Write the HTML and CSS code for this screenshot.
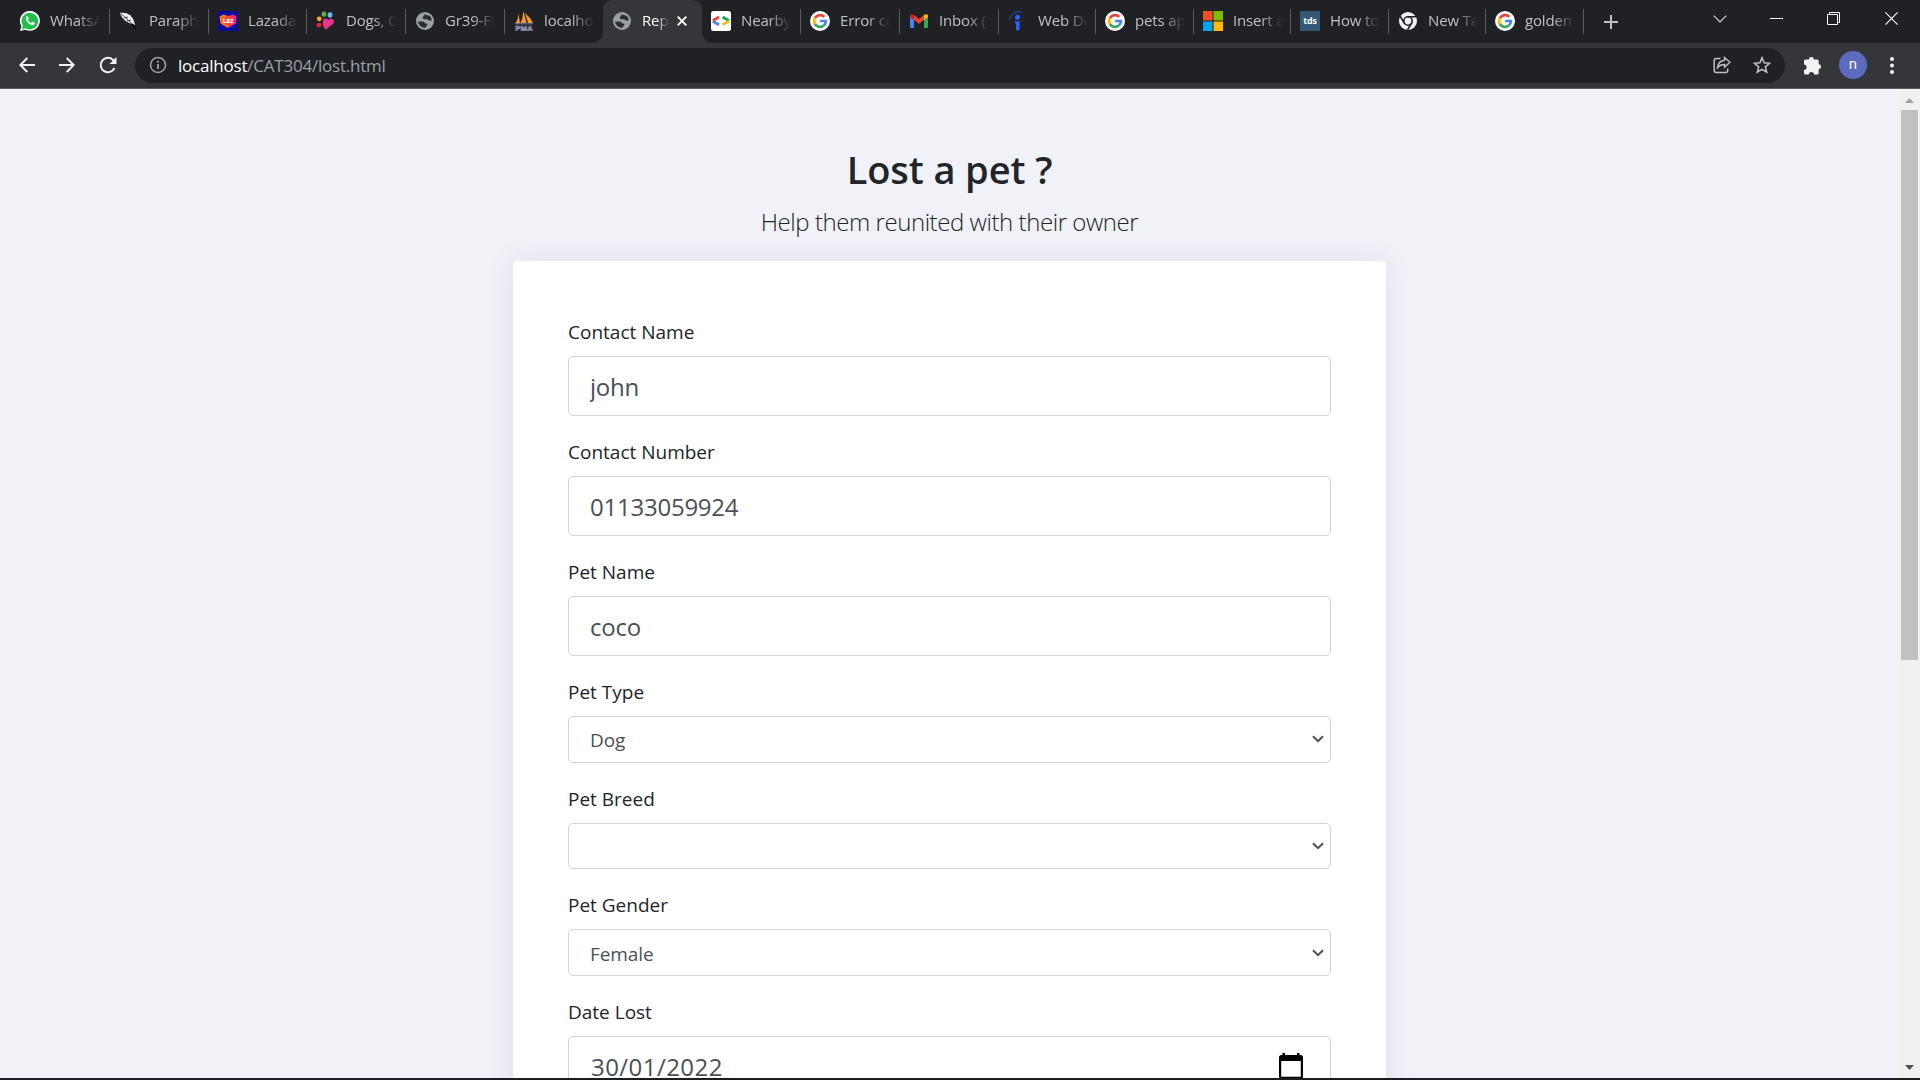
FILE: index.html
```html
<!DOCTYPE html>
<html lang="en">
<head>
<meta charset="utf-8">
<title>Report lost pet</title>
<link rel="stylesheet" href="styles.css">
</head>
<body>
<svg class="defs" width="0" height="0">
  <symbol id="google" viewBox="0 0 20 20">
    <circle cx="10" cy="10" r="10" fill="#fff"/>
    <g fill="none" stroke-width="2.7">
      <path d="M14.3 5.900A5.900 5.900 0 0 0 4.900 7.100" stroke="#ea4335"/>
      <path d="M4.900 7.100a5.900 5.900 0 0 0 0 5.900" stroke="#fbbc05"/>
      <path d="M4.900 13a5.900 5.900 0 0 0 8.900 1.500" stroke="#34a853"/>
      <path d="M13.800 14.500A5.900 5.900 0 0 0 15.900 10H10.200" stroke="#4285f4"/>
    </g>
  </symbol>
  <symbol id="globe" viewBox="0 0 20 20">
    <circle cx="10" cy="10" r="9" fill="#9aa0a6"/>
    <path d="M3 10.500h4.500q2.500 0 2.500 2h1.500q1 0 1 1.200l-2.500 3.200Q4 16.500 3 10.500zM8.500 3.200l6 1.500q2.300 2 2.300 4.800h-3.300l-1.200-1.300H9.500q-1.800 0-1.800-1.800 0-1.500 1.800-1.500z" fill="#2b2d30"/>
  </symbol>
</svg>

<header class="tabs">
  <div class="tab"><svg viewBox="0 0 20 20"><path d="M0 20l1.300-5A10 10 0 1 1 5.200 18.700z" fill="#fff"/><path d="M1.800 18.200l1-3.700a8.300 8.300 0 1 1 2.900 2.800z" fill="#1fc04a"/><path d="M6.700 5.300c-2.500 2 .6 7 4.600 8.700 1.700.8 3.500-.2 3.500-2.200l-2.300-1.200-1.200 1.300c-1.600-.6-2.800-1.800-3.400-3.200l1-1.200-.9-2.200z" fill="#fff"/></svg><span>WhatsApp</span></div>
  <div class="tab"><svg viewBox="0 0 20 20"><path d="M1 2c6-1 13 1 15 12l-3-1C7 11 3 8 1 2z" fill="#f4f4f4"/><path d="M2 2.500l14 13M5 7l4-1M8 10l4-1" stroke="#333" stroke-width=".9" fill="none"/><path d="M13 13l3.500 4.500" stroke="#000" stroke-width="1.500"/></svg><span>Paraphrase</span></div>
  <div class="tab"><svg viewBox="0 0 20 20"><path d="M0 0h20v20H0z" fill="#0a0ea0"/><path d="M1.500 5.500L5.500 3.500 10 5v12L2.500 12.500z" fill="#ff7a00"/><path d="M10 5l5-1.500 3.500 2-.7 7L10 17z" fill="#f5247c"/><path d="M4 6l6-1 5 1v7l-5 2-5-3z" fill="#fa4a3f"/><text x="10" y="12" class="laz">Laz</text></svg><span>Lazada.com</span></div>
  <div class="tab"><svg viewBox="0 0 20 20"><ellipse cx="8" cy="3.200" rx="2.300" ry="2.600" fill="#5fae46"/><ellipse cx="14" cy="4" rx="2.400" ry="2.700" fill="#62c4ee"/><circle cx="3.200" cy="7.800" r="2.400" fill="#f7a71b"/><ellipse cx="3" cy="14" rx="2.500" ry="2.200" fill="#ee1c33"/><path d="M7 10c1-4 5-2 5.500-1 2.500-2.500 6-1 5.300 2.200-.8 3-5 4-7.300 7.300C7.500 18 6.500 13 7 10z" fill="#e83590"/></svg><span>Dogs, Cats</span></div>
  <div class="tab"><svg viewBox="0 0 20 20"><use href="#globe"/></svg><span>Gr39-Final</span></div>
  <div class="tab"><svg viewBox="0 0 20 20"><path d="M1 13Q4 9 4.500 2.500L6 12zM6.500 12Q9 7 9.500 0l3 12zM11 2q5 4 8 10h-5z" fill="#f39a25"/><path d="M1 12.800h18" stroke="#6c78af" stroke-width="1"/><text x="10" y="19.700" class="pma">PMA</text></svg><span>localhost</span></div>
  <div class="tab active"><svg viewBox="0 0 20 20"><use href="#globe"/></svg><span>Report</span><svg class="close" viewBox="0 0 10 10"><path d="M.7.7l8.600 8.600M9.300.7L.7 9.300" stroke="#fff" stroke-width="1.900"/></svg></div>
  <div class="tab plain"><svg viewBox="0 0 20 20"><rect width="20" height="20" rx="2.500" fill="#fff"/><g fill="none" stroke-width="2.700"><path d="M1.800 10.200L8 13.700" stroke="#4285f4"/><path d="M8 6L1.800 9.700" stroke="#ea4335"/><path d="M11.700 6l6.500 3.800" stroke="#0f9d58"/><path d="M18.200 10l-6.500 3.700" stroke="#fbbc05"/></g></svg><span>Nearby S</span></div>
  <div class="tab"><svg viewBox="0 0 20 20"><use href="#google"/></svg><span>Error code</span></div>
  <div class="tab"><svg viewBox="0 0 20 20"><path d="M1 5l4 3v9H2.200Q1 17 1 15.800z" fill="#4285f4"/><path d="M15 8l4-3v10.800q0 1.200-1.200 1.200H15z" fill="#34a853"/><path d="M5 4l5 3.900L15 4v5l-5 3.800L5 9z" fill="#ea4335"/><path d="M1 5c0-2 2.300-2.500 4-1v5L1 6z" fill="#c5221f"/><path d="M19 5c0-2-2.300-2.500-4-1v5l4-3z" fill="#fbbc04"/></svg><span>Inbox (1)</span></div>
  <div class="tab"><svg viewBox="0 0 20 20"><path d="M1.500 9C3 1.500 9-.5 14.500 1.500" fill="none" stroke="#1d4fc4" stroke-width="1"/><circle cx="9.500" cy="6.200" r="2.500" fill="#2962ff"/><path d="M7 10.200h4.600v9H8v-7H7z" fill="#2962ff"/></svg><span>Web Dev</span></div>
  <div class="tab"><svg viewBox="0 0 20 20"><use href="#google"/></svg><span>pets app</span></div>
  <div class="tab"><svg viewBox="0 0 20 20"><path d="M0 0h9.500v9.500H0z" fill="#f25022"/><path d="M10.500 0H20v9.500h-9.500z" fill="#7fba00"/><path d="M0 10.500h9.500V20H0z" fill="#00a4ef"/><path d="M10.500 10.500H20V20h-9.500z" fill="#ffb900"/></svg><span>Insert a</span></div>
  <div class="tab"><svg viewBox="0 0 20 20"><path d="M0 0h20v20H0z" fill="#355876"/><text x="10" y="13" class="tds">tds</text></svg><span>How to u</span></div>
  <div class="tab"><svg viewBox="0 0 20 20"><circle cx="10" cy="10" r="9" fill="#f1f3f4"/><circle cx="10" cy="10" r="4.200" fill="#f1f3f4" stroke="#202124" stroke-width="1.600"/><path d="M10 5.800h8.300M6.300 12.100L2 5M13.600 12.100L9.500 19" stroke="#202124" stroke-width="1.600"/></svg><span>New Tab</span></div>
  <div class="tab"><svg viewBox="0 0 20 20"><use href="#google"/></svg><span>golden r</span></div>
  <div class="window-controls">
    <svg width="16" height="16" viewBox="0 0 16 16"><path d="M8 1v14M1 8h14" stroke="#bdc1c6" stroke-width="2"/></svg>
    <svg class="chevron-down" width="14" height="8" viewBox="0 0 14 8"><path d="M.7.7L7 7 13.300.7" fill="none" stroke="#ddd" stroke-width="1.100"/></svg>
    <svg class="minimise" width="13" height="13" viewBox="0 0 13 13"><path d="M0 6.500h13" stroke="#fff"/></svg>
    <svg class="restore" width="13" height="13" viewBox="0 0 13 13"><path d="M.5 2.500h10v10H.5zM2.500 2.500v-2h10v10h-2" fill="none" stroke="#fff"/></svg>
    <svg class="quit" width="13" height="13" viewBox="0 0 13 13"><path d="M.4.4l12.200 12.200M12.600.4L.4 12.600" stroke="#fff" stroke-width="1.100"/></svg>
  </div>
</header>

<nav class="toolbar">
  <svg width="16" height="16" viewBox="0 0 16 16"><path d="M16 8H1.500M8.300 1L1.300 8l7 7" fill="none" stroke="#f1f3f4" stroke-width="1.900"/></svg>
  <svg width="16" height="16" viewBox="0 0 16 16"><path d="M0 8h14.500M7.700 1l7 7-7 7" fill="none" stroke="#f1f3f4" stroke-width="1.900"/></svg>
  <svg width="18" height="18" viewBox="0 0 18 18"><path d="M15.500 12A7.200 7.200 0 1 1 14 3.900L16 6" fill="none" stroke="#f1f3f4" stroke-width="2"/><path d="M17.500 1v7h-7z" fill="#f1f3f4"/></svg>
  <div class="address">
    <svg width="18" height="18" viewBox="0 0 18 18"><circle cx="9" cy="9" r="7.500" fill="none" stroke="#9aa0a6" stroke-width="1.600"/><path d="M9 8v5M9 4.700v2" stroke="#9aa0a6" stroke-width="1.800"/></svg>
    <span class="url"><b>localhost</b>/CAT304/lost.html</span>
    <svg width="18" height="18" viewBox="0 0 18 18"><path d="M7.500 2.500H3.200Q1.200 2.500 1.200 4.500v10q0 2 2 2h9.500q2 0 2-2v-2" fill="none" stroke="#bdc1c6" stroke-width="1.500"/><path d="M11.500 1.500L17 6.300l-5.500 4.800V8.500c-3 0-5 .7-7 3.200.5-4 3-7 7-7.400z" fill="none" stroke="#bdc1c6" stroke-width="1.400"/></svg>
    <svg width="18" height="18" viewBox="0 0 18 18"><path d="M9 1.800l2.100 5 5.400.5-4.100 3.600 1.200 5.300L9 13.400l-4.600 2.800 1.200-5.300L1.500 7.300l5.400-.5z" fill="none" stroke="#bdc1c6" stroke-width="1.600"/></svg>
  </div>
  <svg width="19" height="19" viewBox="0 0 19 19"><path d="M1 5q0-1.500 1.500-1.500H6a2.400 2.400 0 0 1 4.800 0h3.400q1.500 0 1.500 1.500v3.300a2.400 2.400 0 0 1 0 4.800V17q0 1.500-1.500 1.500H11a2.600 2.600 0 0 0-5.200 0H2.500Q1 18.500 1 17v-3.200a2.600 2.600 0 0 0 0-5.200z" fill="#f1f3f4"/></svg>
  <span class="avatar">n</span>
  <svg width="4" height="17" viewBox="0 0 4 17"><g fill="#f1f3f4"><circle cx="2" cy="2" r="2"/><circle cx="2" cy="8.500" r="2"/><circle cx="2" cy="15" r="2"/></g></svg>
</nav>

<div class="viewport">
  <main class="page">
    <h1>Lost a pet ?</h1>
    <p class="lead">Help them reunited with their owner</p>
    <form class="card">
      <label for="owner">Contact Name</label>
      <div class="control"><input id="owner" value="john"></div>
      <label for="phone">Contact Number</label>
      <div class="control"><input id="phone" value="01133059924"></div>
      <label for="pet">Pet Name</label>
      <div class="control"><input id="pet" value="coco"></div>
      <label for="type">Pet Type</label>
      <div class="control choice"><select id="type"><option>Dog</option></select><svg class="arrow" viewBox="0 0 12 8"><path d="M1 1.200l5 4.900 5-4.900" fill="none" stroke="#495057" stroke-width="2"/></svg></div>
      <label for="breed">Pet Breed</label>
      <div class="control choice"><select id="breed"><option></option></select><svg class="arrow" viewBox="0 0 12 8"><path d="M1 1.200l5 4.900 5-4.900" fill="none" stroke="#495057" stroke-width="2"/></svg></div>
      <label for="gender">Pet Gender</label>
      <div class="control choice"><select id="gender"><option>Female</option></select><svg class="arrow" viewBox="0 0 12 8"><path d="M1 1.200l5 4.900 5-4.900" fill="none" stroke="#495057" stroke-width="2"/></svg></div>
      <label for="date">Date Lost</label>
      <div class="control date"><input id="date" value="30/01/2022"><svg class="calendar" viewBox="0 0 24 26"><path d="M3.500 0H6v3H3.500zM18 0h2.500v3H18z"/><path d="M2.500 2h19Q24 2 24 4.500v19q0 2.500-2.500 2.500h-19Q0 26 0 23.500v-19Q0 2 2.500 2zM2.200 8v15.800h19.600V8z" fill-rule="evenodd"/></svg></div>
    </form>
  </main>
  <aside class="scrollbar">
    <svg width="9" height="5" viewBox="0 0 9 5"><path d="M0 5L4.500 0 9 5z" fill="#a3a3a3"/></svg>
    <div class="thumb"></div>
    <svg width="9" height="5" viewBox="0 0 9 5"><path d="M0 0l4.500 5L9 0z" fill="#505050"/></svg>
  </aside>
</div>
</body>
</html>
```
FILE: styles.css
```css
* { box-sizing: border-box; }
body {
  margin: 0;
  height: 1080px;
  overflow: hidden;
  display: flex;
  flex-direction: column;
  background: #1c1c1e;
  color: #212529;
  font-family: "Open Sans", sans-serif;
}
.defs { position: absolute; }
svg { flex: none; display: block; }

.tabs {
  height: 43px;
  flex: none;
  padding-left: 11px;
  display: grid;
  grid-template-columns: 99px 99px 98px 99px 99px 98px 99px 99px 99px 99px 97px 98px 97px 98px 97px 98px 1fr;
  background: #202124;
}
.tab {
  display: flex;
  align-items: center;
  padding: 0 0 1px 9px;
  background: linear-gradient(#5a5b5e, #5a5b5e) right 0 top 9px / 1px 25px no-repeat;
  font-size: 15px;
  letter-spacing: -0.15px;
  color: #bdc1c6;
}
.tab:nth-child(6) { background: none; }
.tab svg { width: 20px; height: 20px; }
.tab span {
  width: 50px;
  margin-left: 10px;
  padding-bottom: 2px;
  overflow: hidden;
  white-space: nowrap;
  line-height: 22px;
  -webkit-mask-image: linear-gradient(90deg, #000 55%, transparent);
  mask-image: linear-gradient(90deg, #000 55%, transparent);
}
.tab.active {
  position: relative;
  background: #35363a;
  border-radius: 9px 9px 0 0;
  color: #fff;
}
.tab.active::before,
.tab.active::after {
  content: "";
  position: absolute;
  bottom: 0;
  width: 10px;
  height: 10px;
}
.tab.active::before { left: -10px; background: radial-gradient(circle at 0 0, transparent 9.5px, #35363a 10px); }
.tab.active::after { right: -10px; background: radial-gradient(circle at 100% 0, transparent 9.5px, #35363a 10px); }
.tab.active span { width: 27px; }
.tab.active .close { width: 10px; height: 10px; margin-left: 8px; }
.laz { font: bold 6.5px "Open Sans", sans-serif; fill: #fff; text-anchor: middle; }
.tds { font: bold 9px "Open Sans", sans-serif; fill: #fff; text-anchor: middle; }
.pma { font: bold 8px "Liberation Sans", sans-serif; fill: #202124; stroke: #a5abd0; stroke-width: .6px; text-anchor: middle; }
.window-controls { display: flex; align-items: center; padding: 0 22px 6px 19px; }
.window-controls svg:first-child { position: relative; top: 3px; }
.chevron-down { margin-left: 94px; }
.minimise { margin-left: 43px; }
.restore { margin-left: 44px; }
.quit { margin-left: auto; }

.toolbar {
  height: 46px;
  flex: none;
  display: flex;
  align-items: center;
  padding: 0 26px 1px 19px;
  gap: 24px;
  background: #35363a;
  border-bottom: 1px solid #5b5c60;
}
.address {
  flex: 1;
  height: 35px;
  margin: 0 -6px 0 -6px;
  padding: 0 14px 0 14px;
  display: flex;
  align-items: center;
  border-radius: 18px;
  background: #202124;
}
.address svg:last-child { margin-left: 22px; }
.url { flex: 1; margin-left: 11px; padding-top: 1px; font-size: 17px; line-height: 24px; letter-spacing: -0.22px; color: #9aa0a6; }
.url b { font-weight: 400; color: #fff; }
.avatar {
  width: 28px;
  height: 28px;
  margin: 0 -1px 0 -7px;
  border-radius: 50%;
  background: #5c6bc0;
  color: #fff;
  font: 15px/26px Roboto, sans-serif;
  text-align: center;
}

.viewport { height: 989px; display: flex; overflow: hidden; background: #f1f2f8; }
.page { flex: 1; display: flex; flex-direction: column; align-items: center; padding-top: 50px; }
h1 { margin: 0; font-size: 38px; font-weight: 600; line-height: 60px; letter-spacing: -0.1px; white-space: nowrap; }
.lead { margin: 4px 0 20px; font-size: 24px; font-weight: 300; line-height: 38px; letter-spacing: -0.44px; white-space: nowrap; }
.card {
  width: 873px;
  height: 900px;
  flex: none;
  padding: 55px;
  border-radius: 4px;
  background: #fff;
  box-shadow: 0 0 26px rgba(90, 100, 150, .13);
}
label { display: block; height: 30px; margin-bottom: 10px; padding-top: 1px; font-size: 19px; line-height: 30px; }
.control {
  height: 60px;
  margin-bottom: 20px;
  display: flex;
  align-items: center;
  padding: 0 6px 0 21px;
  border: 1px solid #ced4da;
  border-radius: 5px;
}
.control input, .control select {
  flex: 1;
  min-width: 0;
  padding: 2px 0 0;
  border: 0;
  background: none;
  appearance: none;
  font: 24px/38px "Open Sans", sans-serif;
  letter-spacing: -0.24px;
  color: #495057;
}
.control.choice { height: 46.67px; }
.control.choice select { font-size: 19px; line-height: 30px; letter-spacing: -0.1px; }
.arrow { width: 12px; height: 8px; }
.control.date { padding: 0 27px 0 22px; }
.control.date input { letter-spacing: 0.45px; }
.calendar { width: 24px; height: 26px; }

.scrollbar {
  width: 21px;
  display: flex;
  flex-direction: column;
  align-items: center;
  padding: 9px 0 8px;
  background: #f1f1f1;
}
.thumb { width: 17px; height: 550px; margin: 7px 0 auto; background: #c1c1c1; }
```
